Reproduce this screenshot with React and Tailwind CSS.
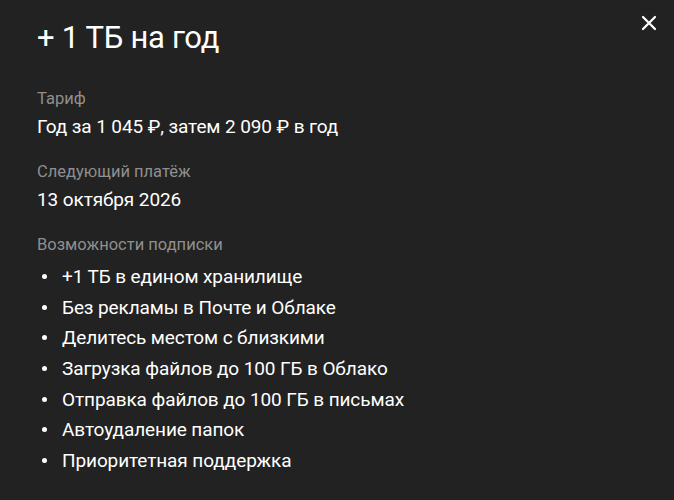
import React from 'react'

const features = [
  '+1 ТБ в едином хранилище',
  'Без рекламы в Почте и Облаке',
  'Делитесь местом с близкими',
  'Загрузка файлов до 100 ГБ в Облако',
  'Отправка файлов до 100 ГБ в письмах',
  'Автоудаление папок',
  'Приоритетная поддержка',
]

export default function App() {
  return (
    <div className="min-h-[500px] w-full bg-[#222222] text-white font-['Roboto',sans-serif] relative px-[37px] pt-[19px]">
      <button className="absolute right-[16px] top-[14px] text-white" aria-label="close">
        <svg viewBox="0 0 24 24" className="w-[18px] h-[18px]" fill="none" stroke="currentColor" strokeWidth="3" strokeLinecap="round">
          <path d="M4 4l16 16M20 4L4 20" />
        </svg>
      </button>
      <h1 className="text-[31px] leading-[38px] font-normal tracking-[-0.3px]">+ 1 ТБ на год</h1>

      <div className="mt-[31px]">
        <div className="text-[16.5px] leading-[22px] text-[#8f8f8f]">Тариф</div>
        <div className="mt-[4px] text-[19px] leading-[25px] tracking-[-0.1px]">Год за 1 045 ₽, затем 2 090 ₽ в год</div>
      </div>

      <div className="mt-[22px]">
        <div className="text-[16.5px] leading-[22px] text-[#8f8f8f]">Следующий платёж</div>
        <div className="mt-[4px] text-[19px] leading-[25px] tracking-[-0.1px]">13 октября 2026</div>
      </div>

      <div className="mt-[22px]">
        <div className="text-[16.5px] leading-[22px] text-[#8f8f8f]">Возможности подписки</div>
        <ul className="mt-[8px] flex flex-col gap-[5.7px]">
          {features.map((f) => (
            <li key={f} className="flex items-center text-[19px] leading-[25px] tracking-[-0.1px]">
              <span className="w-[25px] flex justify-start pl-[5px]">
                <span className="w-[5px] h-[5px] rounded-full bg-white" />
              </span>
              {f}
            </li>
          ))}
        </ul>
      </div>
    </div>
  )
}
